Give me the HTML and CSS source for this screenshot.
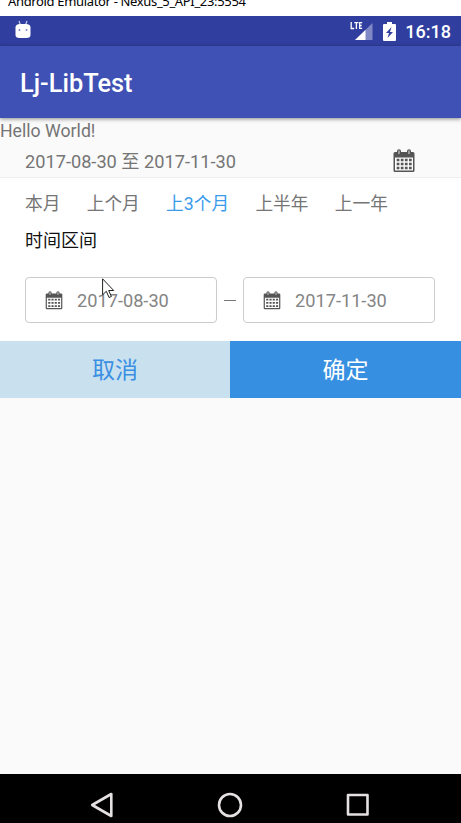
FILE: index.html
```html
<!DOCTYPE html>
<html lang="zh-CN">
<head>
<meta charset="utf-8">
<title>Lj-LibTest</title>
<link rel="stylesheet" href="styles.css">
</head>
<body>
<svg width="0" height="0" class="defs" aria-hidden="true">
  <symbol id="calendar" viewBox="0 0 22 24">
    <path fill-rule="evenodd" d="M2 3h18q1.500 0 1.500 1.500v17q0 1.500-1.500 1.500H2q-1.500 0-1.500-1.500v-17Q.5 3 2 3zM2 8.500v13h18v-13z"/>
    <path class="ring" d="M6 2.200v2.500M16 2.200v2.500"/>
    <path class="ring-hole" d="M6 1.500v3.500M16 1.500v3.500"/>
    <path class="days" d="M3.700 11h15M3.700 15h15M3.700 19h15"/>
  </symbol>
</svg>
<div class="window-title">Android Emulator - Nexus_5_API_23:5554</div>
<header class="status-bar">
  <svg class="robot" width="16" height="19" viewBox="0 0 16 19">
    <path d="M4 1l1.500 4M12 1l-1.500 4" stroke="#c9cdea" stroke-width="1.200"/>
    <path d="M.5 7Q1 4 5 4h6q4 0 4.500 3v8q0 3-4 3h-7q-4 0-4-3z" fill="#fff"/>
    <circle cx="4.500" cy="10" r="1" fill="#7d86c6"/><circle cx="11.500" cy="10" r="1" fill="#7d86c6"/>
  </svg>
  <svg class="signal" width="24" height="20" viewBox="0 0 24 20">
    <path d="M22.500 2v17H5z" fill="#8088c6"/>
    <path d="M15.500 9v10H5z" fill="#fff"/>
    <path d="M0 0h13v8H0z" fill="#303f9f"/>
    <path d="M1.200 1v6.500h3M4.300 1.700h4.200M6.400 1.700v6.300M12.200 1.700H9.700v5.600h2.500M9.700 4.500h2" fill="none" stroke="#fff" stroke-width="1.300"/>
  </svg>
  <svg class="battery" width="13" height="19" viewBox="0 0 13 19">
    <path d="M4 0h5v2h3q1 0 1 1v15q0 1-1 1H1q-1 0-1-1V3q0-1 1-1h3z" fill="#fff"/>
    <path d="M8.500 5L3 11h3l-1.500 5L10 10H7z" fill="#303f9f"/>
  </svg>
  <span class="clock">16:18</span>
</header>
<div class="app-bar">Lj-LibTest</div>
<main class="content">
  <p class="hello">Hello World!</p>
  <div class="range-row">
    <span class="range">2017-08-30 至 2017-11-30</span>
    <svg class="calendar" width="22" height="24"><use href="#calendar"/></svg>
  </div>
  <section class="panel">
    <div class="presets">
      <span>本月</span><span>上个月</span><span class="selected">上3个月</span><span>上半年</span><span>上一年</span>
    </div>
    <h2 class="section-label">时间区间</h2>
    <div class="fields">
      <div class="field"><svg class="calendar" width="18" height="19"><use href="#calendar"/></svg><span class="date">2017-08-30</span>
        <svg class="cursor" width="13" height="21" viewBox="0 0 13 21"><path d="M.6.8v16l3.700-3.500 2.800 6.200 2.300-1-2.700-6h5z"/></svg>
      </div>
      <span class="dash"></span>
      <div class="field"><svg class="calendar" width="18" height="19"><use href="#calendar"/></svg><span class="date">2017-11-30</span></div>
    </div>
  </section>
  <div class="actions"><div class="button cancel">取消</div><div class="button confirm">确定</div></div>
</main>
<nav class="nav-bar">
  <svg width="24" height="26" viewBox="0 0 24 26"><path d="M21.300 2v22L2.200 13z"/></svg>
  <svg width="26" height="26" viewBox="0 0 26 26"><circle cx="13" cy="13" r="11"/></svg>
  <svg width="24" height="24" viewBox="0 0 24 24"><rect x="2" y="2" width="19.500" height="19.500"/></svg>
</nav>
</body>
</html>
```
FILE: styles.css
```css
* { box-sizing: border-box; }
body {
  margin: 0;
  height: 823px;
  display: flex;
  flex-direction: column;
  overflow: hidden;
  background: #fafafa;
  color: #757575;
  font: 18px/24px Roboto, "Noto Sans CJK SC", sans-serif;
  white-space: nowrap;
}
svg { display: block; flex: none; }
.defs { position: absolute; }
.window-title {
  height: 16px;
  padding-left: 8px;
  overflow: hidden;
  background: #fff;
  color: #000;
  font: 13px/2px "Noto Sans", sans-serif;
  letter-spacing: -.34px;
}
.status-bar {
  height: 30px;
  display: flex;
  align-items: center;
  padding: 0 10px 0 15px;
  background: #303f9f;
  color: #fff;
}
.robot { margin-top: -3px; }
.signal { margin-left: auto; }
.battery { margin: 0 9px 0 9px; }
.clock { padding-top: 1px; font-size: 18px; font-weight: 500; }
.app-bar {
  position: relative;
  height: 72px;
  padding-left: 20px;
  background: #3f51b5;
  box-shadow: 0 1px 4px rgba(0, 0, 0, .45);
  color: #fff;
  font-size: 25.400px;
  font-weight: 500;
  line-height: 75px;
}
.content { flex: 1; }
.hello { height: 25px; margin: 0; font-size: 17.700px; line-height: 27px; }
.range-row {
  height: 35px;
  display: flex;
  align-items: center;
  justify-content: space-between;
  padding: 2px 46px 0 25px;
  border-bottom: 1px solid #eee;
}
.range { padding-top: 2px; font-size: 18.200px; }
.calendar { fill: #555; }
.ring { stroke: #555; stroke-width: 4; stroke-linecap: round; }
.ring-hole { stroke: #ccc; stroke-width: 1.200; }
.days { stroke: #555; stroke-width: 2.300; stroke-dasharray: 2.700 1.400; fill: none; }
.panel { height: 163px; padding: 14px 25px 0; background: #fff; }
.presets { display: flex; gap: 26.300px; height: 26px; font-size: 17.700px; }
.selected { color: #3b9cec; }
.section-label {
  height: 24px;
  margin: 11px 0 24px;
  color: #111;
  font-size: 18px;
  font-weight: 400;
}
.fields { display: flex; align-items: center; }
.field {
  position: relative;
  width: 192px;
  height: 46px;
  display: flex;
  align-items: center;
  gap: 14px;
  padding-left: 19px;
  border: 1px solid #ccc;
  border-radius: 4px;
  color: #858585;
}
.date { padding-top: 1px; font-size: 18.200px; }
.dash { width: 12px; height: 1px; margin: 0 7px; background: #777; }
.cursor { position: absolute; left: 76px; top: 0; fill: #fff; stroke: #222; }
.actions { display: flex; height: 57px; }
.button { font-size: 23px; line-height: 60px; text-align: center; }
.cancel { width: 230px; background: #c9e1ef; color: #3a8fe2; }
.confirm { width: 231px; background: #368fe0; color: #fff; }
.nav-bar {
  height: 49px;
  display: flex;
  align-items: center;
  justify-content: space-between;
  padding: 12px 91px 0 90px;
  background: #000;
}
.nav-bar svg { fill: none; stroke: #e5e0e2; stroke-width: 2.600; stroke-linejoin: round; }
```
